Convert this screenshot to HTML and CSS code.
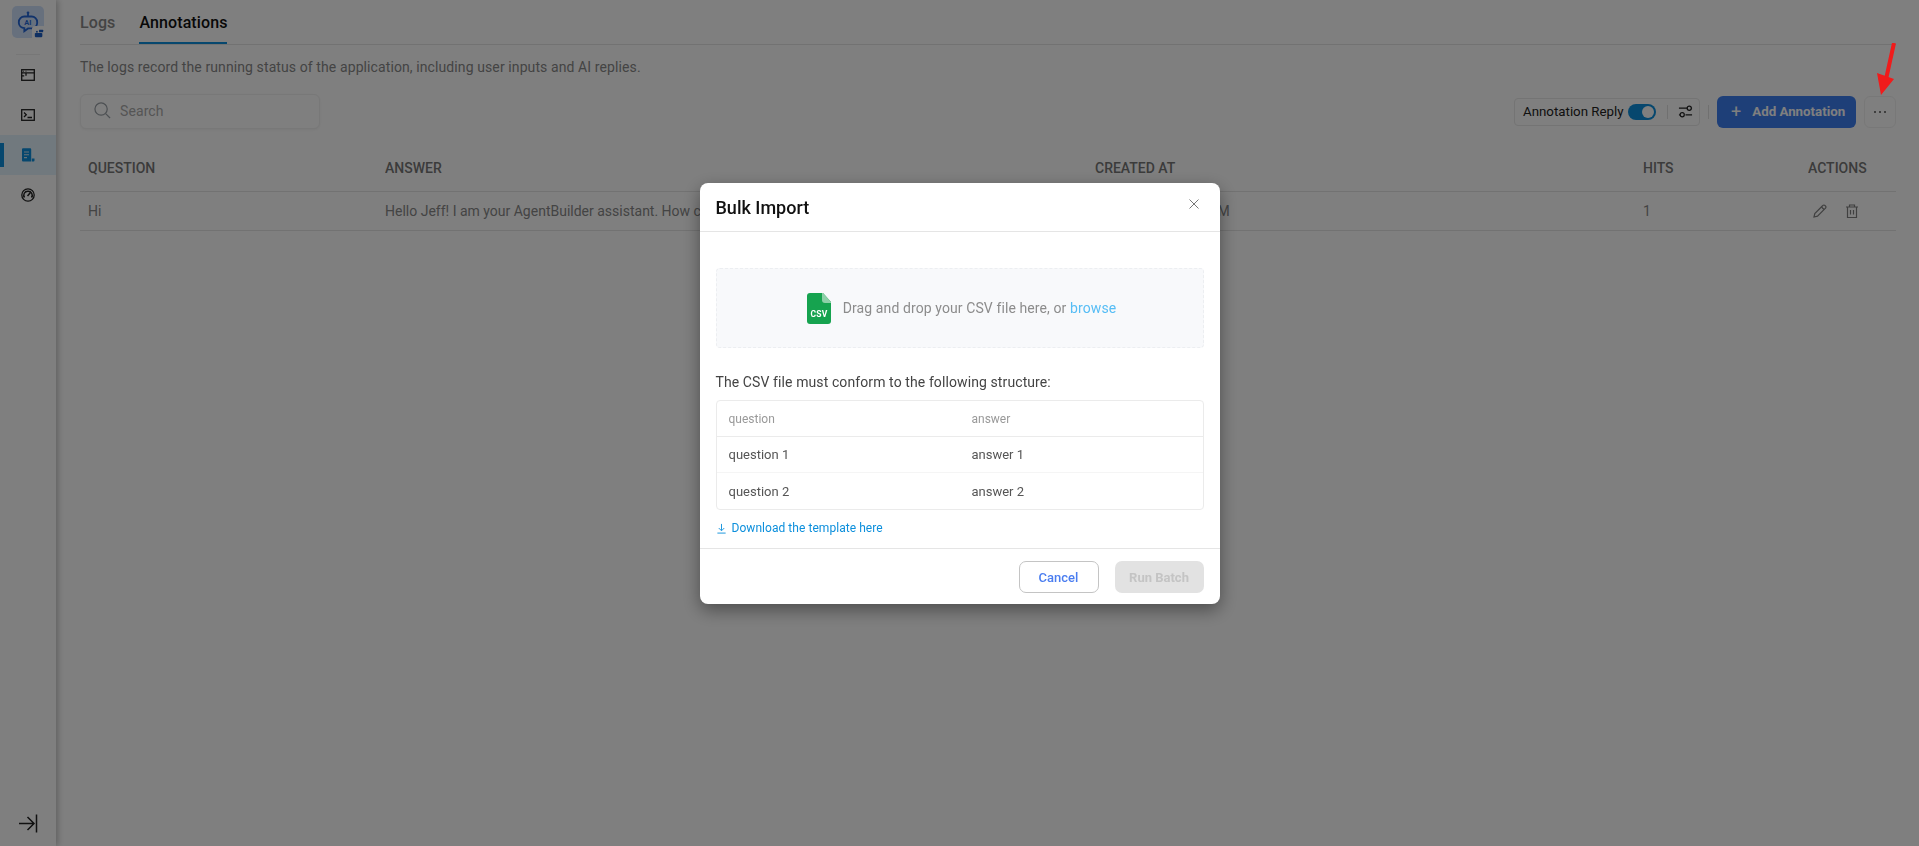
FILE: index.html
```html
<!DOCTYPE html>
<html lang="en">
<head>
    <meta charset="UTF-8">
    <title>Annotations</title>
    <link rel="stylesheet" href="styles.css">
</head>
<body>

<!-- sidebar -->
<aside class="sidebar">
    <div class="logo">
        <svg class="logo-bot" viewBox="0 0 24 24" fill="none" stroke="#2467d6" stroke-width="2">
            <circle cx="12" cy="2" r="1.500" fill="#2467d6" stroke="none"/>
            <path d="M12 3v3"/>
            <path d="M8 6h8a6 6 0 0 1 6 6v1a6 6 0 0 1-6 6h-4l-4 3v-3.300A6 6 0 0 1 2 13v-1a6 6 0 0 1 6-6z"/>
            <text x="12" y="15.500" text-anchor="middle" class="logo-text">AI</text>
        </svg>
        <span class="logo-badge">
            <svg viewBox="0 0 12 12" fill="#1d5fc4"><rect x="1" y="6" width="9" height="5" rx="1"/><rect x="6" y="2" width="5" height="3" rx=".6"/><rect x="2.500" y="3.500" width="2" height="2"/></svg>
        </span>
    </div>
    <div class="side-divider"></div>
    <nav class="side-nav">
        <a class="side-item">
            <svg viewBox="0 0 14 14" fill="none" stroke="#222" stroke-width="1.300"><rect x=".7" y="1.700" width="12.600" height="10.600"/><path d="M.7 4.800h12.600M.7 7.800h2.500M5 4.800v2.900"/><path d="M2 3.200h1M4.500 3.200h1" stroke-width=".9"/></svg>
        </a>
        <a class="side-item">
            <svg viewBox="0 0 14 14" fill="none" stroke="#222" stroke-width="1.300"><rect x=".7" y="1.700" width="12.600" height="10.600"/><path d="M3 4.500l2.300 2.200L3 9M6.500 9.500H11"/></svg>
        </a>
        <a class="side-item active">
            <svg viewBox="0 0 14 14"><path d="M1 1.200A1 1 0 0 1 2 .2h7.200a1 1 0 0 1 1 1V13.500H2a1 1 0 0 1-1-1z" fill="#0c8fdc"/><path d="M3 4h5M3 6.800h5M3 9.600h3" stroke="#cfe4ee" stroke-width="1.100"/><path d="M10.800 10.500h2.700v2a1 1 0 0 1-1 1h-1.700z" fill="#0c8fdc"/></svg>
        </a>
        <a class="side-item">
            <svg viewBox="0 0 14 14" fill="none" stroke="#222"><circle cx="7" cy="7" r="6.200" stroke-width="1.300"/><path d="M3.500 9.500A4 4 0 0 1 7 3.200a4 4 0 0 1 3.500 6.300" stroke-width="1.500"/><path d="M6.500 8l3-3.500" stroke-width="1.500"/></svg>
        </a>
    </nav>
    <svg class="collapse-icon" viewBox="0 0 20 20" fill="none" stroke="#222" stroke-width="1.500"><path d="M1 10.500h15M9.500 4l6.500 6.500L9.500 17M18.500 1.500v18"/></svg>
</aside>

<!-- main -->
<main class="main">
    <div class="tabs">
        <a class="tab">Logs</a>
        <a class="tab tab-active">Annotations</a>
    </div>
    <p class="desc">The logs record the running status of the application, including user inputs and AI replies.</p>

    <div class="toolbar">
        <div class="search">
            <svg viewBox="0 0 18 18" fill="none" stroke="#9aa0a6" stroke-width="1.300"><circle cx="7.500" cy="7.500" r="6.500"/><path d="M12.300 12.300l4.700 4.700"/></svg>
            <span>Search</span>
        </div>
        <div class="tools">
            <div class="reply-box">
                <span>Annotation Reply</span>
                <span class="switch"><i></i></span>
                <span class="reply-sep"></span>
                <svg viewBox="0 0 16 16" fill="none" stroke="#222" stroke-width="1.300"><path d="M1 4.500h9M14.500 4.500H15M1 11.500h1M8 11.500h7"/><circle cx="12" cy="4.500" r="2.200"/><circle cx="4.500" cy="11.500" r="2.200"/></svg>
            </div>
            <span class="tools-sep"></span>
            <button class="btn-add"><b>+</b>Add Annotation</button>
            <button class="btn-more">
                <svg viewBox="0 0 14 4" fill="#555"><circle cx="2" cy="2" r="1"/><circle cx="7" cy="2" r="1"/><circle cx="12" cy="2" r="1"/></svg>
            </button>
        </div>
    </div>

    <div class="table">
        <div class="row row-head">
            <div>QUESTION</div>
            <div>ANSWER</div>
            <div>CREATED AT</div>
            <div>HITS</div>
            <div>ACTIONS</div>
        </div>
        <div class="row">
            <div>Hi</div>
            <div>Hello Jeff! I am your AgentBuilder assistant. How c</div>
            <div>June 8, 2025 2:47 PM</div>
            <div>1</div>
            <div class="actions">
                <svg viewBox="0 0 16 16" fill="none" stroke="#808080" stroke-width="1.200"><path d="M2 14l.8-3.500L10.800 2.500a1.500 1.500 0 0 1 2.200 0l.5.5a1.500 1.500 0 0 1 0 2.200L5.500 13.200z"/><path d="M9.500 4l2.500 2.500"/></svg>
                <svg viewBox="0 0 16 16" fill="none" stroke="#808080" stroke-width="1.200"><path d="M2 4h12M5.500 4V2h5v2M3.500 4v10.500h9V4M6.500 7v4.500M9.500 7v4.500"/></svg>
            </div>
        </div>
    </div>
</main>

<!-- modal -->
<div class="overlay">
    <div class="dialog">
        <div class="dialog-head">
            <h2>Bulk Import</h2>
            <svg class="dialog-close" viewBox="0 0 12 12" fill="none" stroke="#777" stroke-width="1"><path d="M1.500 1.500l9 9M10.500 1.500l-9 9"/></svg>
        </div>
        <div class="dialog-body">
            <div class="dropzone">
                <svg class="csv-icon" viewBox="0 0 24 31">
                    <path d="M3 0h13l8 9v19a3 3 0 0 1-3 3H3a3 3 0 0 1-3-3V3a3 3 0 0 1 3-3z" fill="#16a34f"/>
                    <path d="M15 0h1l8 9v1h-6a3 3 0 0 1-3-3z" fill="#8ed0a8"/>
                    <text x="12" y="23.500" text-anchor="middle" class="csv-text">CSV</text>
                </svg>
                <span>Drag and drop your CSV file here, or <a class="browse">browse</a></span>
            </div>
            <p class="hint">The CSV file must conform to the following structure:</p>
            <div class="sample">
                <div class="sample-row sample-head"><div>question</div><div>answer</div></div>
                <div class="sample-row"><div>question 1</div><div>answer 1</div></div>
                <div class="sample-row"><div>question 2</div><div>answer 2</div></div>
            </div>
            <a class="download">
                <svg viewBox="0 0 12 12" fill="none" stroke="#0c8fdc" stroke-width="1"><path d="M6 1v7M3 5.500L6 8.500l3-3M1.500 11h9"/></svg>
                Download the template here
            </a>
        </div>
        <div class="dialog-foot">
            <button class="btn-cancel">Cancel</button>
            <button class="btn-run">Run Batch</button>
        </div>
    </div>

    <!-- red arrow drawn on the screenshot -->
    <svg class="red-arrow" viewBox="0 0 22 54">
        <path d="M20 0L12.500 34" stroke="#f01b1b" stroke-width="4" fill="none"/>
        <path d="M3 30L20 36L7 52z" fill="#f01b1b"/>
    </svg>
</div>

</body>
</html>
```

FILE: styles.css
```css
/* global */
* {
    box-sizing: border-box;
}
html, body {
    height: 100%;
}
body {
    margin: 0;
    display: flex;
    height: 846px;
    overflow: hidden;
    background: #fff;
    font-family: Roboto, "Liberation Sans", sans-serif;
    font-size: 14px;
    letter-spacing: 0.1px;
    color: #333;
}
p, h2 {
    margin: 0;
}
button {
    font-family: inherit;
    cursor: pointer;
}

/* sidebar */
.sidebar {
    width: 56px;
    flex-shrink: 0;
    display: flex;
    flex-direction: column;
    align-items: stretch;
    box-shadow: 2px 0 6px rgba(0, 0, 0, 0.25);
    background: #fff;
}
.logo {
    width: 32px;
    height: 32px;
    margin: 6px 0 0 12px;
    background: #cfe0fb;
    border-radius: 5px;
    display: flex;
    align-items: center;
    justify-content: center;
    position: relative;
}
.logo-bot {
    width: 22px;
    height: 22px;
}
.logo-text {
    font-size: 8px;
    font-weight: 700;
    fill: #2467d6;
    stroke: none;
}
.logo-badge {
    position: absolute;
    right: -2px;
    bottom: -2px;
    width: 14px;
    height: 14px;
    background: #fff;
    border-radius: 3px;
    display: flex;
    align-items: center;
    justify-content: center;
}
.logo-badge svg {
    width: 10px;
    height: 10px;
}
.side-divider {
    height: 1px;
    margin: 16px 16px 0;
    background: #eee;
}
.side-nav {
    display: flex;
    flex-direction: column;
}
.side-item {
    height: 40px;
    display: flex;
    align-items: center;
    justify-content: center;
    position: relative;
}
.side-item svg {
    width: 14px;
    height: 14px;
}
.side-item.active {
    background: #e3f3fc;
}
.side-item.active::before {
    content: "";
    position: absolute;
    left: 0;
    top: 8px;
    width: 4px;
    height: 24px;
    background: #0c8fdc;
}
.collapse-icon {
    width: 20px;
    height: 20px;
    margin: auto 0 13px 18px;
}

/* main */
.main {
    flex: 1;
    padding: 0 23px 0 24px;
    min-width: 0;
}
.tabs {
    display: flex;
    gap: 24px;
    height: 45px;
    border-bottom: 1px solid #e5e5e5;
}
.tab {
    height: 44px;
    padding-top: 13px;
    font-size: 16px;
    font-weight: 500;
    color: #888;
}
.tab-active {
    color: #111;
    border-bottom: 2px solid #0c8fdc;
}
.desc {
    margin-top: 13px;
    line-height: 18px;
    color: #888;
}
.toolbar {
    margin-top: 18px;
    display: flex;
    justify-content: space-between;
    align-items: center;
}
.search {
    width: 240px;
    height: 35px;
    padding: 0 0 2px 13px;
    display: flex;
    align-items: center;
    gap: 9px;
    background: #fff;
    border: 1px solid #f0f0f0;
    border-radius: 6px;
    box-shadow: 0 1px 3px rgba(0, 0, 0, 0.06);
    color: #aaa;
}
.search svg {
    width: 17px;
    height: 17px;
}
.tools {
    display: flex;
    align-items: center;
}
.reply-box {
    width: 186px;
    height: 28px;
    padding-left: 8px;
    display: flex;
    align-items: center;
    border: 1px solid #e8e8e8;
    border-radius: 4px;
    font-size: 13.300px;
    letter-spacing: 0;
    color: #222;
}
.switch {
    width: 28px;
    height: 16px;
    margin-left: 4px;
    background: #0c8fdc;
    border-radius: 8px;
    display: flex;
    justify-content: flex-end;
    padding: 2px;
}
.switch i {
    width: 12px;
    height: 12px;
    background: #fff;
    border-radius: 50%;
}
.reply-sep {
    width: 1px;
    height: 14px;
    margin: 0 10px 0 11px;
    background: #e0e0e0;
}
.reply-box svg {
    width: 15px;
    height: 15px;
}
.tools-sep {
    width: 1px;
    height: 14px;
    margin: 0 8px;
    background: #e0e0e0;
}
.btn-add {
    width: 139px;
    height: 32px;
    display: flex;
    align-items: center;
    padding: 0 0 0 14px;
    background: #3d7ef0;
    border: none;
    border-radius: 6px;
    color: #fff;
    font-size: 13.300px;
    letter-spacing: 0;
    font-weight: 700;
}
.btn-add b {
    font-size: 18px;
    font-weight: 400;
    margin-right: 11px;
}
.btn-more {
    width: 32px;
    height: 32px;
    margin-left: 8px;
    padding: 0;
    background: #fff;
    border: 1px solid #f0f0f0;
    border-radius: 6px;
    display: flex;
    align-items: center;
    justify-content: center;
}
.btn-more svg {
    width: 14px;
    height: 4px;
}

/* table */
.table {
    margin-top: 14px;
}
.row {
    display: grid;
    grid-template-columns: 297px 710px 548px 165px 1fr;
    height: 39px;
    align-items: center;
    padding-left: 8px;
    border-bottom: 1px solid #e5e5e5;
    letter-spacing: 0;
    color: #888;
}
.row > div {
    white-space: nowrap;
    overflow: hidden;
}
.row-head {
    height: 49px;
    padding-top: 2px;
    font-weight: 500;
    color: #777;
}
.actions {
    display: flex;
    gap: 16px;
    padding-left: 4px;
    align-items: center;
}
.actions svg {
    width: 16px;
    height: 16px;
}

/* modal */
.overlay {
    position: fixed;
    top: 0;
    left: 0;
    width: 100%;
    height: 100%;
    background: rgba(0, 0, 0, 0.5);
    display: flex;
    justify-content: center;
    align-items: flex-start;
    padding-top: 183px;
}
.dialog {
    width: 520px;
    height: 421px;
    background: #fff;
    border-radius: 8px;
    box-shadow: 0 6px 18px rgba(0, 0, 0, 0.4);
    display: flex;
    flex-direction: column;
}
.dialog-head {
    height: 49px;
    padding: 0 16px;
    display: flex;
    align-items: center;
    justify-content: space-between;
    border-bottom: 1px solid #e5e5e5;
}
.dialog-head h2 {
    font-size: 18px;
    font-weight: 500;
    letter-spacing: 0;
    color: #111;
}
.dialog-close {
    width: 12px;
    height: 12px;
    margin: -6px 4px 0 0;
}
.dialog-body {
    flex: 1;
    padding: 36px 16px 0;
}
.dropzone {
    height: 80px;
    padding-left: 4px;
    display: flex;
    align-items: center;
    justify-content: center;
    gap: 12px;
    background: #f8f9fb;
    border: 1px dashed #eceef1;
    border-radius: 4px;
    color: #8c8c8c;
}
.csv-icon {
    width: 24px;
    height: 31px;
}
.csv-text {
    font-size: 8.500px;
    font-weight: 700;
    letter-spacing: 0.3px;
    fill: #fff;
}
.browse {
    color: #56bdf5;
}
.hint {
    margin-top: 25px;
    line-height: 18px;
    color: #444;
}
.sample {
    margin-top: 9px;
    border: 1px solid #ebebeb;
    border-radius: 4px;
    font-size: 13px;
    letter-spacing: 0;
    color: #555;
}
.sample-row {
    display: grid;
    grid-template-columns: 243px 1fr;
    height: 36px;
    align-items: center;
    padding-left: 12px;
    border-bottom: 1px solid #f5f5f5;
}
.sample-row:last-child {
    border-bottom: none;
}
.sample-head {
    height: 36px;
    font-size: 12px;
    color: #999;
    border-bottom: 1px solid #ebebeb;
}
.download {
    display: flex;
    align-items: center;
    gap: 5px;
    margin-top: 11px;
    font-size: 12px;
    letter-spacing: 0.05px;
    color: #0c8fdc;
}
.download svg {
    width: 11px;
    height: 11px;
}
.dialog-foot {
    height: 56px;
    padding: 12px 16px 0;
    display: flex;
    justify-content: flex-end;
    gap: 16px;
    border-top: 1px solid #e5e5e5;
}
.btn-cancel, .btn-run {
    height: 32px;
    font-size: 13px;
    font-weight: 500;
    letter-spacing: 0;
    border-radius: 7px;
    padding: 0;
}
.btn-cancel {
    width: 80px;
    background: #fff;
    border: 1px solid #c4c4c4;
    color: #4a7df0;
}
.btn-run {
    width: 89px;
    background: #e2e2e2;
    border: none;
    font-weight: 700;
    color: #c4c4c4;
}
.red-arrow {
    position: absolute;
    left: 1874px;
    top: 43px;
    width: 22px;
    height: 54px;
}
```
